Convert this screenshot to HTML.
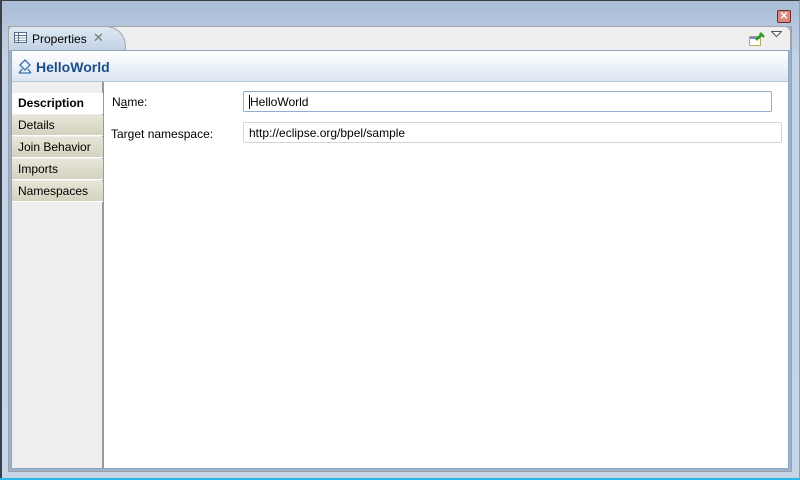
<!DOCTYPE html>
<html><head><meta charset="utf-8"><style>
*{margin:0;padding:0;box-sizing:border-box}
body{width:800px;height:480px;overflow:hidden;font-family:"Liberation Sans",Tahoma,sans-serif;font-size:12px;color:#000;position:relative;background:linear-gradient(#a9bdd6,#c4d3e6 60px,#c6d5e8);}
.frame{position:absolute;left:0;top:0;width:800px;height:480px;border-left:2px solid #3a3f48;border-top:1px solid #3a3f48;border-right:1px solid #8aa0bc}
.bottom{position:absolute;left:0;top:478px;width:800px;height:2px;background:#2bb5e8}
.close{position:absolute;left:777px;top:10px;width:14px;height:13px;background:#d88a80;border:1px solid #7a2a22;border-radius:2px;color:#fff;font-size:10px;line-height:11px;text-align:center;font-weight:bold}
.panel{position:absolute;left:8px;top:26px;width:784px;height:446px;border:1px solid #9aa0a8;border-top:none;background:#9db3cd}
.tabbar{position:absolute;left:8px;top:26px;width:783px;height:24px;background:#efefef;border:1px solid #a6a6a6;border-bottom:none;border-radius:0 6px 0 0}
.tab{position:absolute;left:8px;top:26px;width:118px;height:24px;background:linear-gradient(#dfe8f3,#c3d2e5);border:1px solid #a6a6a6;border-bottom:none;border-radius:4px 20px 0 0;}
.tab span{position:absolute;left:23px;top:5px;font-size:12px}
.tab .x{left:84px;top:3px;color:#777;font-size:13px}
.content{position:absolute;left:11px;top:50px;width:778px;height:419px;background:#fff;border:1px solid #8fa6c0}
.hdr{position:absolute;left:0;top:0;width:776px;height:31px;background:linear-gradient(#fff,#dbe5f2);border-bottom:1px solid #b7c6d8}
.hdr b{position:absolute;left:24px;top:8px;font-size:14px;color:#1c4f8a}
.side{position:absolute;left:0;top:31px;width:92px;height:386px;background:#efefef;border-right:2px solid #999}
.it{position:absolute;left:0;width:91px;height:21px;background:linear-gradient(#e6e5d8,#d4d3c0);border-bottom:1px solid #fff;padding:3px 6px;font-size:12px}
.lab{position:absolute;font-size:12px}
.in{position:absolute;height:21px;border:1px solid #cfd6df;border-radius:2px;padding:3px 5px;font-size:12px;background:#fff}
</style></head><body>
<div class="frame"></div>
<div class="close">✕</div>
<div class="panel"></div>
<div class="tabbar"></div>
<div class="tab">
 <svg style="position:absolute;left:5px;top:5px" width="13" height="12"><rect x="0.5" y="0.5" width="12" height="10" fill="#fff" stroke="#5a6e8a"/><line x1="1" y1="3.5" x2="12" y2="3.5" stroke="#5a6e8a"/><line x1="1" y1="6" x2="12" y2="6" stroke="#8aa"/><line x1="1" y1="8.5" x2="12" y2="8.5" stroke="#8aa"/><line x1="4.5" y1="1" x2="4.5" y2="10" stroke="#5a6e8a"/></svg>
 <span>Properties</span><span class="x">✕</span></div>
<svg style="position:absolute;left:748px;top:32px" width="18" height="14"><rect x="1.5" y="4.5" width="11" height="9" fill="#fff" stroke="#b8a860"/><rect x="2" y="5" width="10" height="2" fill="#5b8fd8"/><path d="M8 8 L14 2 M12 1 L16 5" stroke="#2a9a2a" stroke-width="2.5"/></svg>
<svg style="position:absolute;left:771px;top:31px" width="11" height="7"><path d="M0.5 0.5 L10.5 0.5 L5.5 5.5 Z" fill="#fff" stroke="#555"/></svg>
<div class="content">
 <div class="hdr">
  <svg style="position:absolute;left:6px;top:8px" width="14" height="16"><path d="M7 1 L12 6 L7 11 L2 6 Z" fill="none" stroke="#3a6fb0" stroke-width="1.3"/><path d="M1 14 L4 10 M13 14 L10 10 M1 14 H13" stroke="#3a6fb0" stroke-width="1.3" fill="none"/></svg>
  <b>HelloWorld</b></div>
 <div class="side">
  <div class="it" style="top:11px;background:#fff;font-weight:bold">Description</div>
  <div class="it" style="top:33px">Details</div>
  <div class="it" style="top:55px">Join Behavior</div>
  <div class="it" style="top:77px">Imports</div>
  <div class="it" style="top:99px">Namespaces</div>
 </div>
 <div class="lab" style="left:100px;top:44px">N<u>a</u>me:</div>
 <div class="lab" style="left:99px;top:76px">Tar<u>g</u>et namespace:</div>
 <div class="in" style="left:231px;top:40px;width:529px;border-color:#8fb0d0"><span style="border-left:1px solid #000">H</span>elloWorld</div>
 <div class="in" style="left:231px;top:71px;width:539px">http://eclipse.org/bpel/sample</div>
</div>
<div class="bottom"></div>
</body></html>
